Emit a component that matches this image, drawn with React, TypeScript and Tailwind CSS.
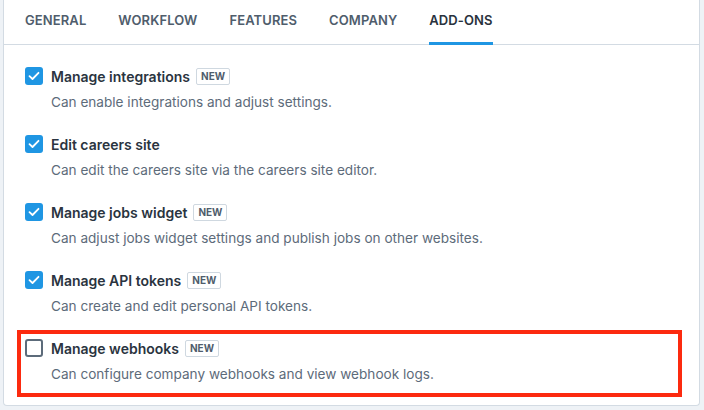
import React from 'react';

const tabs = ['General', 'Workflow', 'Features', 'Company', 'Add-ons'];

const items = [
  { title: 'Manage integrations', isNew: true, checked: true, desc: 'Can enable integrations and adjust settings.' },
  { title: 'Edit careers site', isNew: false, checked: true, desc: 'Can edit the careers site via the careers site editor.' },
  { title: 'Manage jobs widget', isNew: true, checked: true, desc: 'Can adjust jobs widget settings and publish jobs on other websites.' },
  { title: 'Manage API tokens', isNew: true, checked: true, desc: 'Can create and edit personal API tokens.' },
  { title: 'Manage webhooks', isNew: true, checked: false, desc: 'Can configure company webhooks and view webhook logs.', highlight: true },
];

function Checkbox({ checked }: { checked: boolean }) {
  if (!checked) {
    return <div className="w-[18px] h-[18px] rounded-[3px] border-2 border-[#5c6b7a] bg-white shrink-0" />;
  }
  return (
    <div className="w-[18px] h-[18px] rounded-[3px] bg-[#1f96e3] shrink-0 flex items-center justify-center">
      <svg width="12" height="10" viewBox="0 0 12 10" fill="none">
        <path d="M1.5 5.2 L4.5 8 L10.5 1.8" stroke="white" strokeWidth="1.8" strokeLinecap="round" strokeLinejoin="round" />
      </svg>
    </div>
  );
}

export default function App() {
  return (
    <div className="w-[704px] h-[410px] bg-[#eef2f6] pl-[3px] pr-[4px] font-['Inter','Liberation_Sans',sans-serif] overflow-hidden">
      <div className="bg-white border border-[#d3dbe3] border-t-0 rounded-b-[4px] h-[406px]">
        <div className="flex gap-[32px] px-[21px] h-[45px] border-b border-[#d3dbe3]">
          {tabs.map((t) => {
            const active = t === 'Add-ons';
            return (
              <div
                key={t}
                className={`flex items-center uppercase text-[13px] font-semibold tracking-[0.1px] border-b-[3px] -mb-px ${
                  active ? 'text-[#29323d] border-[#1f96e3]' : 'text-[#4f5d6c] border-transparent'
                }`}
              >
                {t}
              </div>
            );
          })}
        </div>

        <div className="px-[21px] pt-[22px] flex flex-col gap-[23px]">
          {items.map((it) => (
            <div key={it.title} className="relative flex gap-[8px]">
              {it.highlight && (
                <div className="absolute left-[-8px] top-[-9px] w-[665px] h-[67px] border-[4px] border-[#fc2a0f] pointer-events-none" />
              )}
              <Checkbox checked={it.checked} />
              <div className="flex flex-col">
                <div className="flex items-center gap-[6px] h-[18px]">
                  <span className="text-[14px] font-semibold text-[#2a3440]">{it.title}</span>
                  {it.isNew && (
                    <span className="text-[10px] font-bold text-[#4f5d6c] border border-[#cfd8e0] rounded-[2px] px-[4px] leading-[15px]">
                      NEW
                    </span>
                  )}
                </div>
                <div className="mt-[7px] text-[13.6px] leading-[20px] text-[#5d6b7a]">{it.desc}</div>
              </div>
            </div>
          ))}
        </div>
      </div>
    </div>
  );
}
